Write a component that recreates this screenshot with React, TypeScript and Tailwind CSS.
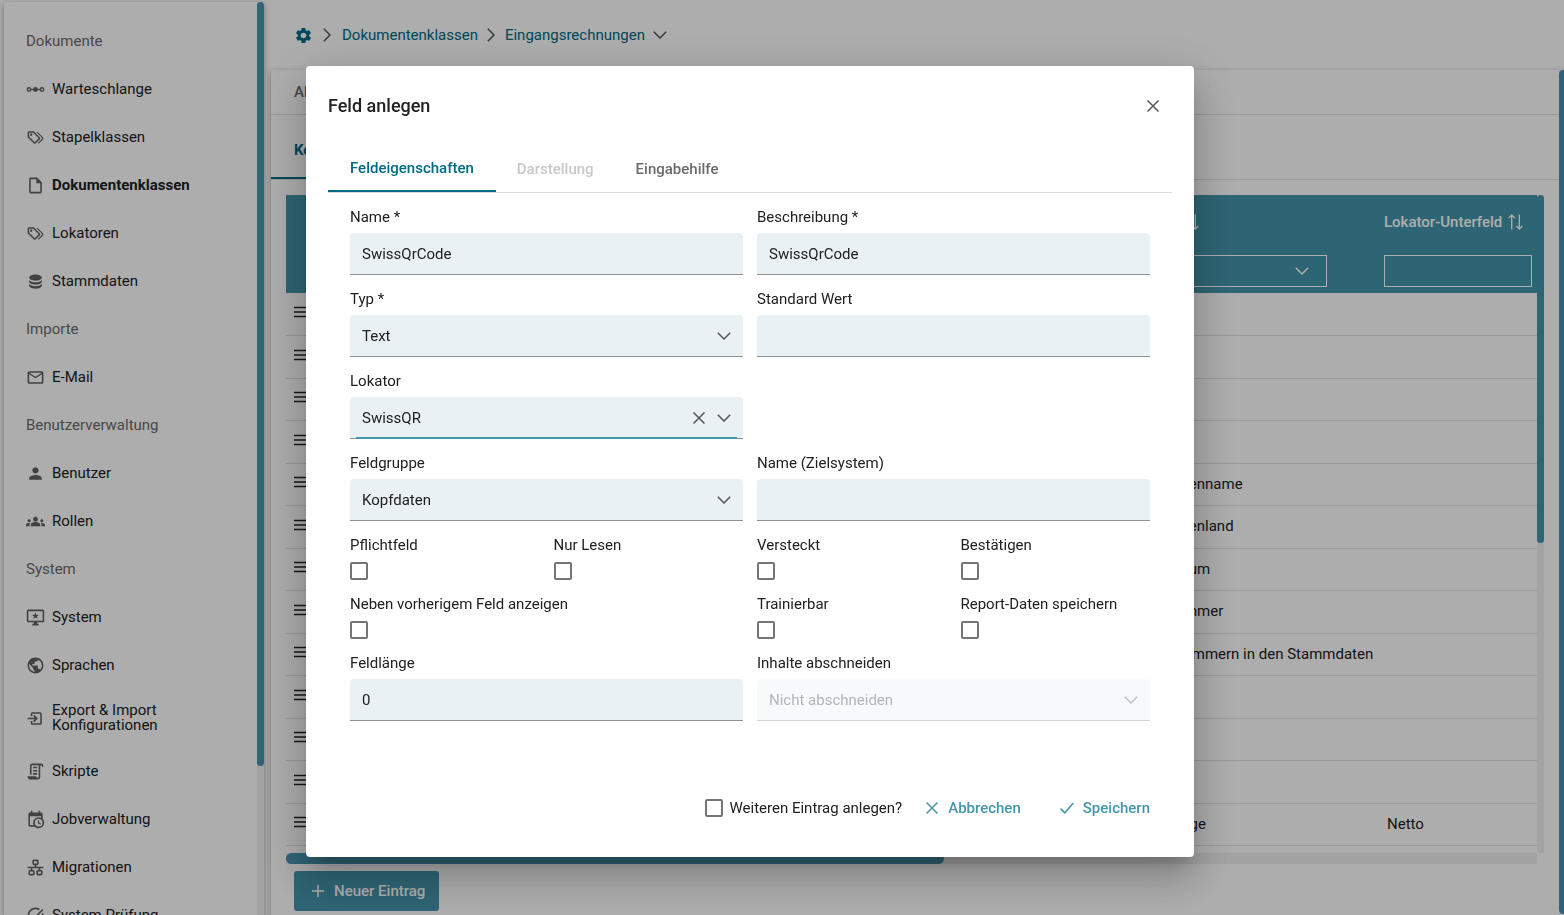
import React from 'react'
import {
  MdGroups,
  MdMailOutline,
  MdOutlineInsertDriveFile,
  MdPerson,
  MdPublic,
  MdSettings,
  MdTaskAlt,
} from 'react-icons/md'

const PATHS = {
  tags: 'M6.5 10C7.3 10 8 9.3 8 8.5S7.3 7 6.5 7 5 7.7 5 8.5 5.7 10 6.5 10M9 6L16 13L11 18L4 11V6H9M9 4H4C2.9 4 2 4.9 2 6V11C2 11.6 2.2 12.1 2.6 12.4L9.6 19.4C9.9 19.8 10.4 20 11 20S12.1 19.8 12.4 19.4L17.4 14.4C17.8 14 18 13.5 18 13C18 12.4 17.8 11.9 17.4 11.6L10.4 4.6C10.1 4.2 9.6 4 9 4M13.5 5.7L14.5 4.7L21.4 11.6C21.8 12 22 12.5 22 13S21.8 14.1 21.4 14.4L16 19.8L15 18.8L20.7 13L13.5 5.7Z',
  database:
    'M12 3C7.58 3 4 4.79 4 7s3.58 4 8 4 8-1.79 8-4-3.58-4-8-4M4 9v3c0 2.21 3.58 4 8 4s8-1.79 8-4V9c0 2.21-3.58 4-8 4s-8-1.79-8-4m0 5v3c0 2.21 3.58 4 8 4s8-1.79 8-4v-3c0 2.21-3.58 4-8 4s-8-1.79-8-4Z',
  monitor:
    'M21 2H3a2 2 0 0 0-2 2v12a2 2 0 0 0 2 2h7v2H8v2h8v-2h-2v-2h7a2 2 0 0 0 2-2V4a2 2 0 0 0-2-2m0 14H3V4h18zM12 5.6l1.1 2.9 3.1.2-2.4 1.9.8 3-2.6-1.7-2.6 1.7.8-3-2.4-1.9 3.1-.2z',
  transfer:
    'M8 4h10a2 2 0 0 1 2 2v12a2 2 0 0 1-2 2H8a2 2 0 0 1-2-2v-3h2v3h10V6H8v3H6V6a2 2 0 0 1 2-2zM2 11h9.2L9 8.8l1.4-1.4L15 12l-4.6 4.6L9 15.2l2.2-2.2H2z',
  script:
    'M15,20A1,1 0 0,0 16,19V4H8A1,1 0 0,0 7,5V16H5V5A3,3 0 0,1 8,2H19A3,3 0 0,1 22,5V6H20V5A1,1 0 0,0 19,4A1,1 0 0,0 18,5V9L18,19A3,3 0 0,1 15,22H5A3,3 0 0,1 2,19V18H13A2,2 0 0,0 15,20M9,6H14V8H9V6M9,10H14V12H9V10M9,14H14V16H9V14Z',
  schedule:
    'M15,13H16.5V15.82L18.94,17.23L18.19,18.53L15,16.69V13M19,8H5V19H9.67C9.24,18.09 9,17.07 9,16A7,7 0 0,1 16,9C17.07,9 18.09,9.24 19,9.67V8M5,21C3.89,21 3,20.1 3,19V5C3,3.89 3.89,3 5,3H6V1H8V3H16V1H18V3H19A2,2 0 0,1 21,5V11.1C22.24,12.36 23,14.09 23,16A7,7 0 0,1 16,23C14.09,23 12.36,22.24 11.1,21H5M16,11.15A4.85,4.85 0 0,0 11.15,16C11.15,18.68 13.32,20.85 16,20.85A4.85,4.85 0 0,0 20.85,16C20.85,13.32 18.68,11.15 16,11.15Z',
  network:
    'M10,2C8.89,2 8,2.89 8,4V7C8,8.11 8.89,9 10,9H11V11H2V13H6V15H5C3.89,15 3,15.89 3,17V20C3,21.11 3.89,22 5,22H9C10.11,22 11,21.11 11,20V17C11,15.89 10.11,15 9,15H8V13H16V15H15C13.89,15 13,15.89 13,17V20C13,21.11 13.89,22 15,22H19C20.11,22 21,21.11 21,20V17C21,15.89 20.11,15 19,15H18V13H22V11H13V9H14C15.11,9 16,8.11 16,7V4C16,2.89 15.11,2 14,2H10M10,4H14V7H10V4M5,17H9V20H5V17M15,17H19V20H15V17Z',
}

const PathIcon = ({ d }: { d: string }) => (
  <svg viewBox="0 0 24 24" width="19" height="19" fill="currentColor" aria-hidden="true">
    <path d={d} />
  </svg>
)

const QueueIcon = () => (
  <svg viewBox="0 0 19 19" width="19" height="19" fill="none" stroke="currentColor" strokeWidth="1.4" aria-hidden="true">
    <circle cx="3" cy="9.5" r="1.7" />
    <circle cx="16" cy="9.5" r="1.7" />
    <circle cx="9.5" cy="9.5" r="2.4" fill="currentColor" stroke="none" />
    <path d="M4.7 9.5h9.6" />
  </svg>
)

const ChevronDown = ({ className }: { className?: string }) => (
  <svg viewBox="0 0 14 8" width="14" height="8" fill="none" stroke="currentColor" strokeWidth="1.5" className={className} aria-hidden="true">
    <path d="M.8 .8L7 7L13.2 .8" />
  </svg>
)

const ChevronRight = () => (
  <svg viewBox="0 0 8 14" width="8" height="14" fill="none" stroke="currentColor" strokeWidth="1.5" className="text-[#555]" aria-hidden="true">
    <path d="M.8 .8L7 7L.8 13.2" />
  </svg>
)

const Cross = () => (
  <svg viewBox="0 0 12 12" width="12" height="12" fill="none" stroke="currentColor" strokeWidth="1.5" aria-hidden="true">
    <path d="M.5 .5l11 11M11.5 .5l-11 11" />
  </svg>
)

const SortIcon = () => (
  <svg viewBox="0 0 15 16" width="15" height="16" fill="none" stroke="currentColor" strokeWidth="1.3" aria-hidden="true">
    <path d="M3.7 15.5V1M.7 4l3-3 3 3M11.3 .5V15M8.3 12l3 3 3-3" />
  </svg>
)

const DragHandle = () => (
  <svg viewBox="0 0 18 12" width="18" height="12" fill="none" stroke="currentColor" strokeWidth="1.5" className="block" aria-hidden="true">
    <path d="M0 1.5h18M0 6h18M0 10.5h18" />
  </svg>
)

interface NavEntry {
  label: string
  icon: React.ReactNode
  active?: boolean
}

const NAV: { title: string; items: NavEntry[] }[] = [
  {
    title: 'Dokumente',
    items: [
      { label: 'Warteschlange', icon: <QueueIcon /> },
      { label: 'Stapelklassen', icon: <PathIcon d={PATHS.tags} /> },
      { label: 'Dokumentenklassen', icon: <MdOutlineInsertDriveFile size={19} />, active: true },
      { label: 'Lokatoren', icon: <PathIcon d={PATHS.tags} /> },
      { label: 'Stammdaten', icon: <PathIcon d={PATHS.database} /> },
    ],
  },
  { title: 'Importe', items: [{ label: 'E-Mail', icon: <MdMailOutline size={19} /> }] },
  {
    title: 'Benutzerverwaltung',
    items: [
      { label: 'Benutzer', icon: <MdPerson size={19} /> },
      { label: 'Rollen', icon: <MdGroups size={19} /> },
    ],
  },
  {
    title: 'System',
    items: [
      { label: 'System', icon: <PathIcon d={PATHS.monitor} /> },
      { label: 'Sprachen', icon: <MdPublic size={19} /> },
      { label: 'Export & Import Konfigurationen', icon: <PathIcon d={PATHS.transfer} /> },
      { label: 'Skripte', icon: <PathIcon d={PATHS.script} /> },
      { label: 'Jobverwaltung', icon: <PathIcon d={PATHS.schedule} /> },
      { label: 'Migrationen', icon: <PathIcon d={PATHS.network} /> },
      { label: 'System Prüfung', icon: <MdTaskAlt size={19} /> },
    ],
  },
]

const ROWS: { locator: string; sub: string }[] = [
  { locator: '', sub: '' },
  { locator: '', sub: '' },
  { locator: '', sub: '' },
  { locator: '', sub: '' },
  { locator: 'Lieferantenname', sub: '' },
  { locator: 'Lieferantenland', sub: '' },
  { locator: 'Belegdatum', sub: '' },
  { locator: 'Belegnummer', sub: '' },
  { locator: 'Bestellnummern in den Stammdaten', sub: '' },
  { locator: '', sub: '' },
  { locator: '', sub: '' },
  { locator: '', sub: '' },
  { locator: 'Endbeträge', sub: 'Netto' },
  { locator: '', sub: '' },
]

function Sidebar() {
  return (
    <aside className="mt-[2px] ml-1 flex w-[260px] shrink-0 bg-white shadow-[0_2px_6px_rgba(0,0,0,0.35)]">
      <nav className="min-w-0 flex-1 overflow-hidden pt-[15px] pl-[22px]">
        {NAV.map((group) => (
          <section key={group.title}>
            <h2 className="flex h-12 items-center text-[#6b6b6b]">{group.title}</h2>
            <ul>
              {group.items.map((item) => (
                <li key={item.label}>
                  <a
                    href="#"
                    className={`flex min-h-12 items-center gap-[7px] py-[14px] leading-[15px] ${item.active ? 'font-bold' : ''}`}
                  >
                    <span className="shrink-0 text-[#616161]">{item.icon}</span>
                    <span className="max-w-36">{item.label}</span>
                  </a>
                </li>
              ))}
            </ul>
          </section>
        ))}
      </nav>
      <div className="w-[7px] bg-[#f0f0f0]">
        <div className="h-36/43 rounded bg-[#4595ac]" />
      </div>
    </aside>
  )
}

function Breadcrumb() {
  return (
    <nav aria-label="Breadcrumb" className="flex h-[70px] shrink-0 items-center pl-[23px] text-[#006a84]">
      <a href="#" aria-label="Einstellungen">
        <MdSettings size={19} />
      </a>
      <span className="ml-[10px]">
        <ChevronRight />
      </span>
      <a href="#" className="ml-[11px]">
        Dokumentenklassen
      </a>
      <span className="ml-[9px]">
        <ChevronRight />
      </span>
      <a href="#" className="ml-[10px]">
        Eingangsrechnungen
      </a>
      <ChevronDown className="ml-2 text-[#555]" />
    </nav>
  )
}

function FieldTable() {
  return (
    <div className="flex min-h-0 flex-1">
      <div className="flex min-w-0 flex-1 flex-col">
        <div className="min-h-0 flex-1 overflow-hidden">
          <table className="w-full table-fixed border-collapse text-left">
            <thead className="bg-[#4595ac] text-white">
              <tr className="h-[98px] align-top">
                <th aria-label="Reihenfolge" className="w-10" />
                <th />
                <th className="w-[257px] px-[5px] pt-[18px] font-medium">
                  <div className="flex h-[18px] items-center gap-[6px]">
                    Lokator <SortIcon />
                  </div>
                  <div className="relative mt-6 w-[200px]">
                    <select aria-label="Lokator filtern" className="block h-8 w-full appearance-none border border-white px-2">
                      <option></option>
                    </select>
                    <ChevronDown className="pointer-events-none absolute top-3 right-[18px]" />
                  </div>
                </th>
                <th className="w-[158px] px-[5px] pt-[18px] font-medium">
                  <div className="flex h-[18px] items-center gap-[6px]">
                    Lokator-Unterfeld <SortIcon />
                  </div>
                  <input aria-label="Lokator-Unterfeld filtern" className="mt-6 block h-8 w-full border border-white px-2" />
                </th>
              </tr>
            </thead>
            <tbody>
              {ROWS.map((row, i) => (
                <tr key={i} className="border-b border-[#e0e0e0] odd:h-[42px] even:h-[43px]">
                  <td className="pb-1 pl-2">
                    <DragHandle />
                  </td>
                  <td />
                  <td className="pl-2 whitespace-nowrap">{row.locator}</td>
                  <td className="pl-2">{row.sub}</td>
                </tr>
              ))}
            </tbody>
          </table>
        </div>
        <div className="h-[11px] shrink-0 bg-[#f0f0f0]">
          <div className="h-full w-10/19 rounded-full bg-[#4595ac]" />
        </div>
      </div>
      <div className="mb-[11px] w-[7px] bg-[#f0f0f0]">
        <div className="h-9/17 rounded bg-[#4595ac]" />
      </div>
    </div>
  )
}

function MainPanel() {
  return (
    <main className="ml-[7px] flex min-w-0 flex-1 flex-col">
      <Breadcrumb />
      <div className="flex min-h-0 flex-1 bg-white shadow-[0_2px_6px_rgba(0,0,0,0.35)]">
        <div className="flex min-w-0 flex-1 flex-col">
          <div className="flex h-[45px] shrink-0 items-center border-b border-[#e0e0e0] pl-[23px] font-medium text-[#6b6b6b]">
            <button type="button">Alle</button>
          </div>
          <div className="flex h-[65px] shrink-0 border-b border-[#e0e0e0]">
            <button type="button" className="border-b-2 border-[#006a84] px-[23px] pt-2 font-bold text-[#006a84]">
              Kopf
            </button>
          </div>
          <div className="flex min-h-0 flex-1 flex-col px-[15px] pt-[15px] pb-1">
            <FieldTable />
            <button
              type="button"
              className="mt-[7px] ml-2 flex h-10 shrink-0 items-center gap-[10px] self-start rounded-[3px] bg-[#4595ac] pr-[14px] pl-[18px] font-medium text-white"
            >
              <svg viewBox="0 0 12 12" width="12" height="12" stroke="currentColor" strokeWidth="1.5" aria-hidden="true">
                <path d="M6 0v12M0 6h12" />
              </svg>
              Neuer Eintrag
            </button>
          </div>
        </div>
        <div className="mb-px w-[5px] rounded-l bg-[#4595ac]" />
      </div>
    </main>
  )
}

const controlClass =
  'block h-[42px] w-full appearance-none rounded-t border-b border-[#8b9194] bg-[#e9f1f5] px-3 text-[#212121] outline-none disabled:border-[#d0d2d3] disabled:bg-[#f6fafb] disabled:text-[#b3b5b6] disabled:opacity-100'

interface FieldProps {
  id: string
  label: string
  value?: string
}

const Label = ({ id, label }: { id: string; label: string }) => (
  <label htmlFor={id} className="block leading-[18px]">
    {label}
  </label>
)

const TextField = ({ id, label, value = '' }: FieldProps) => (
  <div className="col-span-2 flex flex-col gap-[7px]">
    <Label id={id} label={label} />
    <input id={id} type="text" defaultValue={value} className={controlClass} />
  </div>
)

const SelectField = ({
  id,
  label,
  value,
  disabled,
  focused,
}: FieldProps & { disabled?: boolean; focused?: boolean }) => (
  <div className="col-span-2 flex flex-col gap-[7px]">
    <Label id={id} label={label} />
    <div className="relative">
      <select id={id} disabled={disabled} className={`${controlClass} pt-[2px]`}>
        <option>{value}</option>
      </select>
      <ChevronDown
        className={`pointer-events-none absolute top-[17px] right-3 ${disabled ? 'text-[#c0c2c3]' : 'text-[#555]'}`}
      />
      {focused && (
        <>
          <button type="button" aria-label="Auswahl löschen" className="absolute top-[15px] right-[38px] text-[#555]">
            <Cross />
          </button>
          <span className="absolute inset-x-[6px] bottom-0 h-[2px] bg-[#4595ac]" />
        </>
      )}
    </div>
  </div>
)

const checkboxClass = 'size-[18px] shrink-0 appearance-none rounded-[2px] border-2 border-[#757575] bg-white'

const CheckField = ({ id, label, wide }: FieldProps & { wide?: boolean }) => (
  <div className={`flex flex-col gap-2 ${wide ? 'col-span-2' : ''}`}>
    <Label id={id} label={label} />
    <input id={id} type="checkbox" className={checkboxClass} />
  </div>
)

function FieldDialog() {
  return (
    <div
      role="dialog"
      aria-modal="true"
      aria-labelledby="dialog-title"
      className="w-full max-w-[888px] rounded bg-white px-[22px] pb-[27px] shadow-[0_11px_15px_-7px_rgba(0,0,0,0.2),0_24px_38px_3px_rgba(0,0,0,0.14),0_9px_46px_8px_rgba(0,0,0,0.12)]"
    >
      <header className="flex h-20 items-center justify-between pr-[13px]">
        <h1 id="dialog-title" className="text-lg font-medium">
          Feld anlegen
        </h1>
        <button type="button" aria-label="Schließen" className="text-[#555]">
          <Cross />
        </button>
      </header>
      <div role="tablist" className="flex h-[47px] border-b border-[#dedede] font-medium">
        <button type="button" role="tab" aria-selected="true" className="border-b-2 border-[#006a84] px-[22px] text-[#006a84]">
          Feldeigenschaften
        </button>
        <button type="button" role="tab" disabled className="px-[21px] text-[#c8c8c8]">
          Darstellung
        </button>
        <button type="button" role="tab" className="px-[21px] text-[#6b6b6b]">
          Eingabehilfe
        </button>
      </div>
      <form className="px-[22px] pt-[15px]">
        <div className="grid grid-cols-4 gap-x-[14px] gap-y-[15px]">
          <TextField id="name" label="Name *" value="SwissQrCode" />
          <TextField id="description" label="Beschreibung *" value="SwissQrCode" />
          <SelectField id="type" label="Typ *" value="Text" />
          <TextField id="default" label="Standard Wert" />
          <SelectField id="locator" label="Lokator" value="SwissQR" focused />
          <div className="col-span-2" />
          <SelectField id="group" label="Feldgruppe" value="Kopfdaten" />
          <TextField id="target" label="Name (Zielsystem)" />
          <CheckField id="required" label="Pflichtfeld" />
          <CheckField id="readonly" label="Nur Lesen" />
          <CheckField id="hidden" label="Versteckt" />
          <CheckField id="confirm" label="Bestätigen" />
          <CheckField id="inline" label="Neben vorherigem Feld anzeigen" wide />
          <CheckField id="trainable" label="Trainierbar" />
          <CheckField id="report" label="Report-Daten speichern" />
          <TextField id="length" label="Feldlänge" value="0" />
          <SelectField id="truncate" label="Inhalte abschneiden" value="Nicht abschneiden" disabled />
        </div>
        <footer className="mt-[65px] flex h-11 items-center justify-end text-[#4595ac]">
          <label className="flex items-center gap-[7px] text-[#212121]">
            <input type="checkbox" className={checkboxClass} />
            Weiteren Eintrag anlegen?
          </label>
          <button type="button" className="ml-6 flex items-center gap-[10px] font-medium">
            <Cross />
            Abbrechen
          </button>
          <button type="button" className="ml-[39px] flex items-center gap-[9px] font-medium">
            <svg viewBox="0 0 14 12" width="14" height="12" fill="none" stroke="currentColor" strokeWidth="1.5" aria-hidden="true">
              <path d="M.6 6.6L4.8 10.8L13.4 1" />
            </svg>
            Speichern
          </button>
        </footer>
      </form>
    </div>
  )
}

export default function App() {
  return (
    <div className="flex h-screen overflow-hidden bg-white font-[Roboto,sans-serif] text-[15px] text-[#212121]">
      <Sidebar />
      <MainPanel />
      <div className="fixed inset-0 flex items-center justify-center bg-black/32 pt-2 pr-16">
        <FieldDialog />
      </div>
    </div>
  )
}
